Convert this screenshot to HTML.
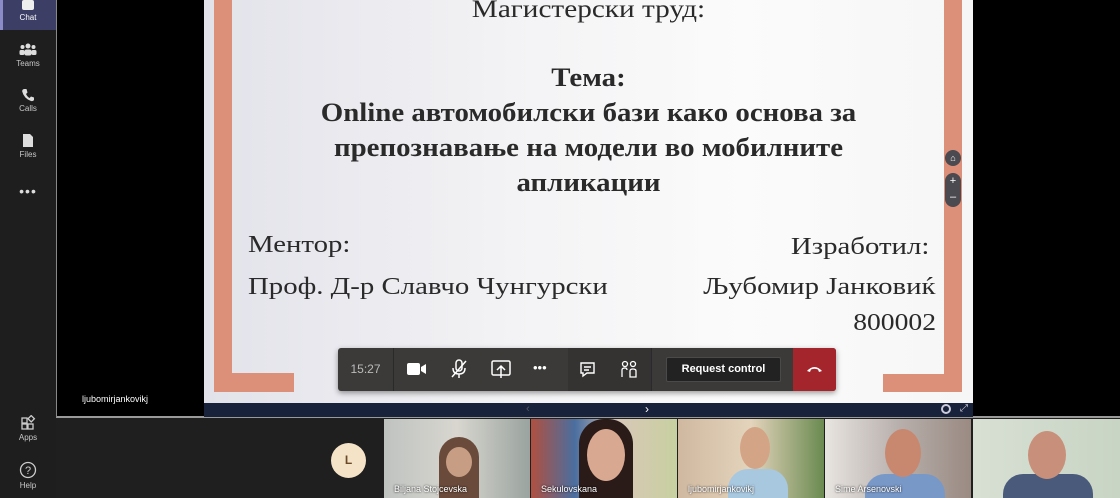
<!DOCTYPE html>
<html><head><meta charset="utf-8"><style>
*{margin:0;padding:0;box-sizing:border-box}
body{width:1120px;height:498px;overflow:hidden;background:#1f1f1f;position:relative;font-family:"Liberation Sans",sans-serif}
.abs{position:absolute}
.side{left:0;top:0;width:56px;height:498px;background:#1e1e1e}
.si{position:absolute;left:0;width:56px;text-align:center;color:#c8c8c8;font-size:8px}
.main{left:56px;top:0;width:1064px;height:418px;background:#000;border-left:1px solid #888;border-bottom:2px solid #9a9a9a}
.slide{left:204px;top:0;width:769px;height:403px;background:linear-gradient(90deg,#e2e2ea 0%,#f3f3f5 40%,#fbfbfb 70%,#f6f6f6 100%)}
.or{background:#dc907a;position:absolute}
.serif{font-family:"Liberation Serif",serif;color:#2a2a2a;position:absolute;white-space:nowrap}
.b{font-weight:bold}
.L{transform:scaleX(1.2);transform-origin:left top}
.R{transform:scaleX(1.2);transform-origin:right top}
.nav{left:204px;top:403px;width:769px;height:14px;background:#18223a}
.tb{left:338px;top:348px;width:498px;height:43px;background:#3b3a39;border-radius:3px;box-shadow:0 2px 6px rgba(0,0,0,.4)}
.tile{position:absolute;top:419px;height:79px}
.nm{position:absolute;bottom:4px;left:60px;color:#fff;font-size:9px;text-shadow:0 0 2px #000}
</style></head><body>
<div class="abs side">
  <div class="abs" style="left:0;top:0;width:56px;height:30px;background:#3d3e66;border-left:3px solid #8b8cc7"></div>
  <div class="si" style="top:0"><div style="width:12px;height:10px;background:#eee;margin:0 auto;border-radius:2px"></div><div style="margin-top:3px;color:#fff">Chat</div></div>
  <div class="si" style="top:43px"><svg width="18" height="14" viewBox="0 0 18 14"><circle cx="9" cy="3" r="2.5" fill="#ddd"/><circle cx="3.5" cy="4" r="2" fill="#ddd"/><circle cx="14.5" cy="4" r="2" fill="#ddd"/><rect x="5.5" y="6.5" width="7" height="6" rx="2" fill="#ddd"/><rect x="0.5" y="7" width="5" height="5" rx="1.5" fill="#ddd"/><rect x="12.5" y="7" width="5" height="5" rx="1.5" fill="#ddd"/></svg><div>Teams</div></div>
  <div class="si" style="top:88px"><svg width="14" height="14" viewBox="0 0 14 14"><path d="M3 1 L5.5 1 L6.5 4.5 L5 6 Q6.5 9 8.5 10 L10 8.5 L13 9.5 L13 12 Q12 13.5 10 13 Q3 10.5 1.2 3.5 Q1 1.5 3 1Z" fill="#ddd"/></svg><div>Calls</div></div>
  <div class="si" style="top:133px"><svg width="12" height="15" viewBox="0 0 12 15"><path d="M1 1 L8 1 L11 4 L11 14 L1 14Z" fill="#ddd"/></svg><div>Files</div></div>
  <div class="si" style="top:183px;font-size:14px;letter-spacing:1px;color:#ddd">•••</div>
  <div class="si" style="top:415px"><svg width="16" height="16" viewBox="0 0 16 16" fill="none" stroke="#ccc" stroke-width="1.3"><rect x="2" y="3" width="5" height="5"/><rect x="2" y="9" width="5" height="5"/><rect x="8" y="9" width="5" height="5"/><rect x="9" y="1.5" width="4.5" height="4.5" transform="rotate(45 11.2 3.7)"/></svg><div>Apps</div></div>
  <div class="si" style="top:461px"><svg width="18" height="18" viewBox="0 0 18 18"><circle cx="9" cy="9" r="7.5" fill="none" stroke="#ccc" stroke-width="1.3"/><text x="9" y="13" font-size="11" text-anchor="middle" fill="#ccc" font-family="Liberation Sans">?</text></svg><div>Help</div></div>
</div>
<div class="abs main"></div>
<div class="abs" style="left:82px;top:394px;color:#fff;font-size:9px">ljubomirjankovikj</div>
<div class="abs slide">
  <div class="or" style="left:10px;top:0;width:18px;height:392px"></div>
  <div class="or" style="left:10px;top:373px;width:80px;height:19px"></div>
  <div class="or" style="left:740px;top:0;width:18px;height:392px"></div>
  <div class="or" style="left:679px;top:374px;width:79px;height:18px"></div>
  <div class="serif" style="left:0;width:769px;text-align:center;top:-4px;font-size:25px;transform:scaleX(1.17)">Магистерски труд:</div>
  <div class="serif b" style="left:0;width:769px;text-align:center;top:60px;font-size:26px;line-height:35px;transform:scaleX(1.11)">Тема:<br>Online автомобилски бази како основа за<br>препознавање на модели во мобилните<br>апликации</div>
  <div class="serif L" style="left:44px;top:232px;font-size:24px">Ментор:</div>
  <div class="serif L" style="left:44px;top:274px;font-size:24px">Проф. Д-р Славчо Чунгурски</div>
  <div class="serif R" style="right:44px;top:234px;font-size:24px">Изработил:</div>
  <div class="serif R" style="right:37px;top:274px;font-size:24px">Љубомир Јанковиќ</div>
  <div class="serif R" style="right:37px;top:310px;font-size:24px;transform:scaleX(1.15)">800002</div>
  <div class="abs" style="left:741px;top:150px;width:16px;height:16px;border-radius:8px;background:#4a4a50;color:#fff;font-size:9px;text-align:center;line-height:16px">⌂</div>
  <div class="abs" style="left:741px;top:173px;width:16px;height:34px;border-radius:8px;background:#4a4a50;color:#fff;font-size:11px;text-align:center;line-height:16px">+<br>–</div>
</div>
<div class="abs nav"><div class="abs" style="left:322px;top:0;color:#556;font-size:11px">‹</div><div class="abs" style="left:441px;top:-1px;color:#fff;font-size:12px">›</div><div class="abs" style="left:737px;top:1px;width:10px;height:10px;border:2px solid #ccd;border-radius:50%"></div><div class="abs" style="left:756px;top:0;color:#ccd;font-size:10px">⤢</div></div>
<div class="abs tb">
  <div class="abs" style="left:0;top:0;width:56px;height:43px;border-right:1px solid #2a2a2a;color:#bbb;font-size:12px;line-height:43px;text-align:center">15:27</div>
  <svg class="abs" style="left:69px;top:14px" width="20" height="14" viewBox="0 0 20 14"><rect x="0" y="1" width="13" height="12" rx="2" fill="#fff"/><path d="M14 5 L19 2 L19 12 L14 9Z" fill="#fff"/></svg>
  <svg class="abs" style="left:112px;top:11px" width="18" height="20" viewBox="0 0 18 20" fill="none" stroke="#fff" stroke-width="1.5"><rect x="6" y="1" width="6" height="11" rx="3"/><path d="M3 9 Q3 15 9 15 Q15 15 15 9 M9 15 L9 19"/><path d="M2 18 L16 2"/></svg>
  <svg class="abs" style="left:153px;top:12px" width="20" height="19" viewBox="0 0 20 19" fill="none" stroke="#fff" stroke-width="1.5"><rect x="1" y="1" width="18" height="14" rx="1.5"/><path d="M10 18 L10 6 M6 10 L10 6 L14 10"/></svg>
  <div class="abs" style="left:195px;top:12px;color:#fff;font-size:13px">•••</div>
  <div class="abs" style="left:230px;top:0;width:83px;height:43px;background:#343332"></div>
  <svg class="abs" style="left:241px;top:13px" width="17" height="17" viewBox="0 0 17 17" fill="none" stroke="#fff" stroke-width="1.4"><path d="M2 2 H15 V12 H8 L4 15 V12 H2Z"/><path d="M5 6 H12 M5 9 H10"/></svg>
  <svg class="abs" style="left:282px;top:12px" width="18" height="19" viewBox="0 0 18 19" fill="none" stroke="#fff" stroke-width="1.3"><circle cx="5" cy="4" r="2.5"/><circle cx="13" cy="4" r="2.5"/><path d="M2 17 V10 Q2 8 5 8 Q7 8 7 10 M10 17 V11 Q10 9 13 9 Q16 9 16 11 V17 Z"/></svg>
  <div class="abs" style="left:313px;top:0;width:1px;height:43px;background:#2a2a2a"></div>
  <div class="abs" style="left:328px;top:9px;width:115px;height:25px;background:#232222;border:1px solid #4a4a4a;border-radius:2px;color:#fff;font-size:11px;font-weight:bold;text-align:center;line-height:23px">Request control</div>
  <div class="abs" style="left:455px;top:0;width:43px;height:43px;background:#a4262c;border-radius:0 3px 3px 0"><svg class="abs" style="left:13px;top:17px" width="17" height="8" viewBox="0 0 17 8"><path d="M1 6 Q8.5 -2 16 6 L13 7 L12 4.5 Q8.5 3 5 4.5 L4 7Z" fill="#fff"/></svg></div>
</div>
<div class="abs" style="left:331px;top:443px;width:35px;height:35px;border-radius:50%;background:#f5e3c8;color:#6b4a2a;font-size:12px;font-weight:bold;text-align:center;line-height:35px">L</div>
<div class="tile" style="left:384px;width:146px;background:linear-gradient(90deg,#bfc3c0,#d8d6cf 50%,#9aa39f)"><div class="abs" style="left:55px;top:18px;width:40px;height:61px;background:#6a4a3a;border-radius:20px 20px 0 0"></div><div class="abs" style="left:62px;top:28px;width:26px;height:30px;background:#c79d84;border-radius:50%"></div><div class="nm" style="left:10px">Biljana Stojcevska</div></div>
<div class="tile" style="left:531px;width:146px;background:linear-gradient(90deg,#b05040,#4a6ea0 30%,#d8c8b8 60%,#c8d0a0)"><div class="abs" style="left:48px;top:0;width:54px;height:79px;background:#2a1a18;border-radius:25px 25px 0 0"></div><div class="abs" style="left:56px;top:10px;width:38px;height:52px;background:#d9a890;border-radius:50%"></div><div class="nm" style="left:10px">Sekulovskana</div></div>
<div class="tile" style="left:678px;width:146px;background:linear-gradient(90deg,#d0b8a0,#e4d4bc 50%,#6a8a50)"><div class="abs" style="left:50px;top:50px;width:60px;height:29px;background:#a8c8e0;border-radius:20px 20px 0 0"></div><div class="abs" style="left:62px;top:8px;width:30px;height:42px;background:#d4a486;border-radius:50%"></div><div class="nm" style="left:10px">ljubomirjankovikj</div></div>
<div class="tile" style="left:825px;width:146px;background:linear-gradient(90deg,#e8e4e0,#b8b0ac 50%,#9a8a82)"><div class="abs" style="left:40px;top:55px;width:80px;height:24px;background:#7898c8;border-radius:20px 20px 0 0"></div><div class="abs" style="left:60px;top:10px;width:36px;height:48px;background:#c88870;border-radius:50%"></div><div class="nm" style="left:10px">Sime Arsenovski</div></div>
<div class="tile" style="left:973px;width:147px;background:linear-gradient(90deg,#d8e0d4,#c8d4c4)"><div class="abs" style="left:30px;top:55px;width:90px;height:24px;background:#4a5a7a;border-radius:20px 20px 0 0"></div><div class="abs" style="left:55px;top:12px;width:38px;height:48px;background:#c8907a;border-radius:50%"></div></div>
</body></html>
